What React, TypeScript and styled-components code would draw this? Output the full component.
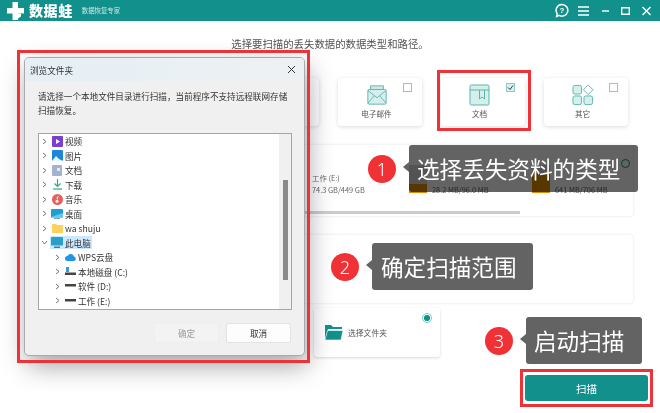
import React from "react";
import styled, { createGlobalStyle } from "styled-components";

const Global = createGlobalStyle`
  html, body { margin: 0; padding: 0; background: #fff; }
  * { box-sizing: border-box; }
  body { font-family: "Noto Sans CJK SC", "Noto Sans", sans-serif; overflow: hidden; }
`;
const Page = styled.div`position: relative; width: 660px; height: 413px; overflow: hidden; background: #fff; display: flex; flex-direction: column;`;
const Header = styled.header`height: 21px; background: #12908c; display: flex; align-items: center; padding: 0 9px 0 7px; color: #fff;`;
const Brand = styled.div`font-size: 14px; font-weight: 900; letter-spacing: 0.6px; margin-left: 5px; line-height: 21px;`;
const Slogan = styled.div`font-size: 6.4px; margin-left: 9px; opacity: .8; line-height: 21px;`;
const HeaderTools = styled.div`margin-left: auto; display: flex; align-items: center;`;
const Tool = styled.span<{ $ml: number }>`display: flex; margin-left: ${p => p.$ml}px;`;
const Title = styled.h1`margin: 16px 0 0; height: 14px; line-height: 14px; font-size: 10.4px; font-weight: 400; color: #555; text-align: center;`;
const CardRow = styled.div`display: flex; gap: 19px; justify-content: flex-end; padding-right: 32px; margin-top: 27px;`;
const Card = styled.div`position: relative; width: 84px; height: 48px; background: #fff; border-radius: 4px; box-shadow: 0 1px 4px rgba(0,0,0,.14); display: flex; flex-direction: column; align-items: center; padding: 6px 7px 0 0;`;
const CardLabel = styled.div`font-size: 7.6px; color: #555; line-height: 10px; margin-top: 3px;`;
const Check = styled.div<{ $on?: boolean }>`position: absolute; right: 10px; top: 5px; width: 9px; height: 9px; border: 1px solid #8fc9c5; background: ${p => p.$on ? "#d9f0ee" : "#fff"}; display: flex; align-items: center; justify-content: center;`;
const Panel = styled.section<{ $h: number; $mt: number }>`align-self: flex-end; margin-right: 27px; width: 520px; height: ${p => p.$h}px; margin-top: ${p => p.$mt}px; background: #fff; border-radius: 3px; box-shadow: 0 0 3px rgba(0,0,0,.13); position: relative;`;
const DriveList = styled.div`display: flex; height: 31px; margin-top: 0; padding: 20px 0 0 199px; box-sizing: content-box;`;
const Drive = styled.div<{ $w: number }>`display: flex; width: ${p => p.$w}px; gap: 5px;`;
const DriveText = styled.div`align-self: flex-end; display: flex; flex-direction: column; font-size: 7.4px; line-height: 12px; color: #666; white-space: nowrap;`;
const DriveIcon = styled.div<{ $fill: number }>`width: 18px; height: 28px; background: linear-gradient(to top, #e38a00 ${p => p.$fill}px, #d5d5d5 ${p => p.$fill}px); flex: none;`;
const UsageBar = styled.div`height: 3px; width: 215px; background: #ccc; margin: 15px 0 0 192px;`;
const PanelRadio = styled.div`position: absolute; right: 3px; top: 14px; width: 9px; height: 9px; border-radius: 50%; border: 1px solid #12908c;`;
const FolderRow = styled.div`display: flex; justify-content: flex-end; padding-right: 220px; margin-top: 5px;`;
const FolderCard = styled.div`position: relative; width: 126px; height: 49px; background: #fff; border-radius: 3px; box-shadow: 0 1px 3px rgba(0,0,0,.16); display: flex; align-items: center; padding-left: 10px; gap: 5px; font-size: 7.8px; color: #555;`;
const Radio = styled.div`position: absolute; right: 8px; top: 5px; width: 10px; height: 10px; border-radius: 50%; border: 1px solid #7cc; background: radial-gradient(circle, #12908c 0 2.8px, #fff 3.2px);`;
const ButtonRow = styled.div`display: flex; justify-content: flex-end; padding-right: 12px; margin-top: 18px;`;
const ScanButton = styled.button`width: 123px; height: 26px; background: #12908c; color: #fff; border: 0; border-radius: 3px; font: 10.5px "Noto Sans CJK SC", sans-serif; padding: 0;`;
const RedFrame = styled.div<{ $x: number; $y: number; $w: number; $h: number }>`position: absolute; left: ${p => p.$x}px; top: ${p => p.$y}px; width: ${p => p.$w}px; height: ${p => p.$h}px; border: 3px solid #ee3338; pointer-events: none;`;
const Dialog = styled.div`position: absolute; left: 24px; top: 57px; width: 281px; height: 299px; background: #f0f0f0; border: 1px solid #a9aaae; border-radius: 5px; box-shadow: 3px 10px 26px rgba(0,0,0,.36); display: flex; flex-direction: column; padding: 0 12px 0 13px;`;
const DialogBar = styled.div`margin: 0 -12px 0 -13px; height: 23px; border-radius: 4px 4px 0 0; background: linear-gradient(90deg, #e5eff5, #eef1f3); display: flex; align-items: center; justify-content: space-between; padding: 0 8px 0 5px; font-size: 8.6px; color: #333;`;
const DialogText = styled.p`margin: 8px 0 0; font-size: 8.6px; line-height: 14px; color: #333; height: 36px;`;
const Tree = styled.div`margin-top: 8px; width: 254px; height: 177px; background: #fff; border: 1px solid #a5a5a5; position: relative; overflow: hidden;`;
const TreeRow = styled.div<{ $level?: number }>`height: 14.5px; display: flex; align-items: center; padding-left: ${p => p.$level ? 15 : 2}px; font-size: 8.6px; color: #333; white-space: nowrap;`;
const Chevron = styled.span`width: 9px; flex: none; display: flex; align-items: center;`;
const TreeItem = styled.span<{ $sel?: boolean }>`display: flex; align-items: center; height: 13px; padding: 0 1px; background: ${p => p.$sel ? "#cce8ff" : "transparent"};`;
const TreeIcon = styled.span`width: 12px; height: 12px; margin-right: 2px; flex: none; display: flex; align-items: center; justify-content: center;`;
const ScrollTrack = styled.div`position: absolute; right: 0; top: 0; bottom: 0; width: 12px; background: #f0f0f0; display: flex; justify-content: center;`;
const ScrollThumb = styled.div`width: 5px; height: 100px; margin-top: 46px; background: #8a8a8a;`;
const DialogButtons = styled.div`display: flex; justify-content: flex-end; gap: 7px; margin-top: 13px; padding-right: 1px;`;
const DlgButton = styled.button<{ $off?: boolean }>`width: 65px; height: 20px; border: 1px solid ${p => p.$off ? "#eee" : "#e3e3e3"}; background: ${p => p.$off ? "#f3f3f3" : "#fdfdfd"}; color: ${p => p.$off ? "#9c9c9c" : "#333"}; font: 8.6px "Noto Sans CJK SC", sans-serif; padding: 0; border-radius: 2px;`;
const Note = styled.div<{ $x: number; $y: number }>`position: absolute; left: ${p => p.$x}px; top: ${p => p.$y}px; display: flex; align-items: center;`;
const Badge = styled.div`width: 28px; height: 28px; border-radius: 50%; background: #f03237; color: #fff; font: 300 18px "Noto Sans", sans-serif; display: flex; align-items: center; justify-content: center;`;
const Bubble = styled.div<{ $w: number; $pl: number }>`position: relative; margin-left: 13px; width: ${p => p.$w}px; height: 47px; color: #fff; font-size: 22.6px; line-height: 47px; padding-left: ${p => p.$pl}px; white-space: nowrap;
  &::before { content: ""; position: absolute; inset: 0; background: #636363; border-radius: 3px; mix-blend-mode: multiply; }
  &::after { content: ""; position: absolute; left: -6px; top: 17px; border: 5.500px solid transparent; border-left: 0; border-right: 6px solid #636363; }`;
const BubbleText = styled.span`position: relative; z-index: 1;`;

const Logo = () => (
  <svg width="17" height="18" viewBox="0 0 17 18">
    <path d="M5.500 0h5.500v6h6v5.500h-6V18H5.500v-6.500H0V6h5.500z" fill="#fff" />
    <path d="M11 14.500a3.500 3.500 0 0 0 3.500-3" fill="none" stroke="#12908c" strokeWidth="1" />
    <path d="M11 11.500h3v3l-3 2z" fill="#fff" />
  </svg>
);
const S = { fill: "none", stroke: "#fff", strokeWidth: 1.4 };
const Tools = () => (
  <HeaderTools>
    <Tool $ml={0}><svg width="14" height="15" viewBox="0 0 14 15"><path d="M7 1.500a5.800 5.800 0 1 1-2.900 10.800L1.600 13.500l.6-2.800A5.800 5.800 0 0 1 7 1.500z" {...S} /><text x="7" y="10" fontSize="8" fill="#fff" textAnchor="middle" fontFamily="Liberation Sans" fontWeight="700">?</text></svg></Tool>
    <Tool $ml={9}><svg width="11" height="12" viewBox="0 0 11 12"><path d="M0 2h11M0 6h11M0 10h11" {...S} /></svg></Tool>
    <Tool $ml={13}><svg width="7" height="12" viewBox="0 0 7 12"><path d="M0 6h7" {...S} /></svg></Tool>
    <Tool $ml={12}><svg width="9" height="12" viewBox="0 0 9 12"><path d="M.7 2.700h7.600v6.600H.7z" {...S} /></svg></Tool>
    <Tool $ml={12}><svg width="9" height="12" viewBox="0 0 9 12"><path d="M.5 2l8 8M8.500 2l-8 8" {...S} /></svg></Tool>
  </HeaderTools>
);
const teal = { fill: "#d5f0ec", stroke: "#5cb5ad", strokeWidth: 1 };
const MailIcon = () => <svg width="22" height="22" viewBox="0 0 24 24"><path d="M5 6V2h14v4" fill="#cdeae6" stroke="#5cb5ad" /><rect x="2" y="6" width="20" height="16" rx="1.500" {...teal} /><path d="M2 7l10 8 10-8M2 21l7-8M22 21l-7-8" fill="none" stroke="#5cb5ad" /></svg>;
const DocIcon = () => <svg width="21" height="22" viewBox="0 0 21 22"><rect x="1" y="1" width="19" height="20" rx="1.500" {...teal} /><path d="M1 6h19M10.500 6v9l2.500-2 2.500 2V6" fill="none" stroke="#5cb5ad" /></svg>;
const OtherIcon = () => <svg width="22" height="22" viewBox="0 0 23 23"><rect x="1" y="1.500" width="9" height="9" rx="2" {...teal} /><rect x="1" y="12.500" width="9" height="9" rx="2" {...teal} /><rect x="12.500" y="12.500" width="9" height="9" rx="2" {...teal} /><path d="M17 1l5 5-5 5-5-5z" fill="#fff" stroke="#5cb5ad" /></svg>;
const FolderIcon = () => <svg width="19" height="17" viewBox="0 0 19 17"><path d="M1 16V1h6l2 2h9v2H4z" fill="#12908c" /><path d="M1 16L3.500 6.500H19L17 16z" fill="#12908c" stroke="#fff" strokeWidth=".6" /></svg>;
const Chev = ({ open }: { open?: boolean }) => <svg width="7" height="7" viewBox="0 0 7 7"><path d={open ? "M1 2l2.500 3L6 2" : "M2 1l3 2.500L2 6"} fill="none" stroke="#777" /></svg>;

type Row = { label: string; level?: number; open?: boolean; sel?: boolean; icon: React.ReactNode };
const rows: Row[] = [
  { label: "视频", icon: <svg width="11" height="11"><rect width="11" height="11" rx="1" fill="#7a3fd0" /><path d="M4 3l4 2.500L4 8z" fill="#fff" /></svg> },
  { label: "图片", icon: <svg width="11" height="11"><rect width="11" height="11" rx="1" fill="#1b87d9" /><path d="M0 11l4-5 3 3 4 2z" fill="#e8f5ff" /></svg> },
  { label: "文档", icon: <svg width="10" height="11"><rect width="10" height="11" rx="1" fill="#a3b4d0" /><rect x="5" y="3" width="3" height="3" fill="#e4eaf4" /></svg> },
  { label: "下载", icon: <svg width="11" height="11"><path d="M5.500 0v7M2.500 4.500l3 3 3-3" fill="none" stroke="#28b07a" strokeWidth="1.200" /><path d="M1 10h9" stroke="#28b07a" strokeWidth="1.200" /></svg> },
  { label: "音乐", icon: <svg width="11" height="11"><circle cx="5.500" cy="5.500" r="5.500" fill="#e8605a" /><path d="M6.500 2.500C4.500 3 5 5 6 5.500" stroke="#fff" fill="none" /><circle cx="5" cy="7.300" r="1.500" fill="#fff" /></svg> },
  { label: "桌面", icon: <svg width="12" height="10"><rect width="12" height="8.500" rx="1" fill="#1d9fd6" /><path d="M0 8l12-4v4.500H0z" fill="#63c9ec" /><rect x="3" y="9" width="6" height="1" fill="#7aa" /></svg> },
  { label: "wa shuju", icon: <svg width="11" height="10"><path d="M0 1h4l1 1h6v8H0z" fill="#fbd25f" /></svg> },
  { label: "此电脑", open: true, sel: true, icon: <svg width="12" height="11"><rect width="12" height="8.500" rx="1" fill="#2a9fc9" /><rect x="3" y="9.500" width="6" height="1.500" fill="#55778a" /></svg> },
  { label: "WPS云盘", level: 1, icon: <svg width="11" height="8"><path d="M2.500 8a2.500 2.500 0 0 1 0-5A3.500 3.500 0 0 1 9 3.500 2.300 2.300 0 0 1 9 8z" fill="#1f95e6" /></svg> },
  { label: "本地磁盘 (C:)", level: 1, icon: <svg width="11" height="9"><rect x="1" width="3" height="5" fill="#3a9ad9" /><rect y="5.500" width="11" height="2.500" fill="#444" /></svg> },
  { label: "软件 (D:)", level: 1, icon: <svg width="11" height="4"><rect width="11" height="2.500" fill="#444" /></svg> },
  { label: "工作 (E:)", level: 1, icon: <svg width="11" height="4"><rect width="11" height="2.500" fill="#444" /></svg> },
];

export default function App() {
  return (
    <Page>
      <Global />
      <Header>
        <Logo />
        <Brand>数据蛙</Brand>
        <Slogan>数据恢复专家</Slogan>
        <Tools />
      </Header>
      <Title>选择要扫描的丢失数据的数据类型和路径。</Title>
      <CardRow>
        <Card />
        <Card><MailIcon /><CardLabel>电子邮件</CardLabel><Check /></Card>
        <Card><DocIcon /><CardLabel>文档</CardLabel><Check $on><svg width="7" height="7" viewBox="0 0 7 7"><path d="M1 3.500l2 2 3-4" fill="none" stroke="#244" strokeWidth="1" /></svg></Check></Card>
        <Card><OtherIcon /><CardLabel>其它</CardLabel><Check /></Card>
      </CardRow>
      <Panel $h={71} $mt={19}>
        <DriveList>
          <Drive $w={97}><DriveText><span>工作 (E:)</span><span>74.3 GB/449 GB</span></DriveText></Drive>
          <Drive $w={123}><DriveIcon $fill={9} /><DriveText><span>28.2 MB/96.0 MB</span></DriveText></Drive>
          <Drive $w={85}><DriveIcon $fill={20} /><DriveText><span>641 MB/706 MB</span></DriveText></Drive>
        </DriveList>
        <UsageBar />
        <PanelRadio />
      </Panel>
      <Panel $h={68} $mt={19} />
      <FolderRow>
        <FolderCard><FolderIcon />选择文件夹<Radio /></FolderCard>
      </FolderRow>
      <ButtonRow><ScanButton>扫描</ScanButton></ButtonRow>

      <Dialog>
        <DialogBar>
          浏览文件夹
          <svg width="9" height="9" viewBox="0 0 9 9"><path d="M1 1l7 7M8 1L1 8" stroke="#333" fill="none" /></svg>
        </DialogBar>
        <DialogText>请选择一个本地文件目录进行扫描，当前程序不支持远程联网存储扫描恢复。</DialogText>
        <Tree>
          {rows.map(r => (
            <TreeRow key={r.label} $level={r.level}>
              <Chevron><Chev open={r.open} /></Chevron>
              <TreeItem $sel={r.sel}><TreeIcon>{r.icon}</TreeIcon>{r.label}</TreeItem>
            </TreeRow>
          ))}
          <ScrollTrack><ScrollThumb /></ScrollTrack>
        </Tree>
        <DialogButtons>
          <DlgButton $off>确定</DlgButton>
          <DlgButton>取消</DlgButton>
        </DialogButtons>
      </Dialog>

      <RedFrame $x={17} $y={50} $w={293} $h={313} />
      <RedFrame $x={437} $y={70} $w={94} $h={61} />
      <RedFrame $x={520} $y={369} $w={133} $h={38} />

      <Note $x={368} $y={145}><Badge>1</Badge><Bubble $w={229} $pl={8}><BubbleText>选择丢失资料的类型</BubbleText></Bubble></Note>
      <Note $x={331} $y={243}><Badge>2</Badge><Bubble $w={161} $pl={9}><BubbleText>确定扫描范围</BubbleText></Bubble></Note>
      <Note $x={485} $y={317}><Badge>3</Badge><Bubble $w={116} $pl={8}><BubbleText>启动扫描</BubbleText></Bubble></Note>
    </Page>
  );
}
